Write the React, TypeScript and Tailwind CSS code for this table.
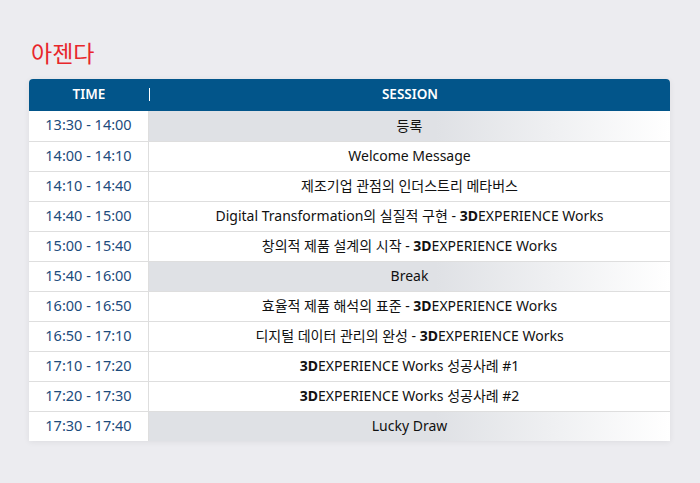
import React from "react";

type Row = { time: string; session: React.ReactNode; gray?: boolean };

const TD = () => <b className="font-bold">3D</b>;

const rows: Row[] = [
  { time: "13:30 - 14:00", session: "등록", gray: true },
  { time: "14:00 - 14:10", session: "Welcome Message" },
  { time: "14:10 - 14:40", session: "제조기업 관점의 인더스트리 메타버스" },
  {
    time: "14:40 - 15:00",
    session: (
      <>
        {"Digital Transformation의 실질적 구현 -\u00a0"}
        <TD />
        {"EXPERIENCE Works"}
      </>
    ),
  },
  {
    time: "15:00 - 15:40",
    session: (
      <>
        {"창의적 제품 설계의 시작 -\u00a0"}
        <TD />
        {"EXPERIENCE Works"}
      </>
    ),
  },
  { time: "15:40 - 16:00", session: "Break", gray: true },
  {
    time: "16:00 - 16:50",
    session: (
      <>
        {"효율적 제품 해석의 표준 -\u00a0"}
        <TD />
        {"EXPERIENCE Works"}
      </>
    ),
  },
  {
    time: "16:50 - 17:10",
    session: (
      <>
        {"디지털 데이터 관리의 완성 -\u00a0"}
        <TD />
        {"EXPERIENCE Works"}
      </>
    ),
  },
  {
    time: "17:10 - 17:20",
    session: (
      <>
        <TD />
        {"EXPERIENCE Works 성공사례 #1"}
      </>
    ),
  },
  {
    time: "17:20 - 17:30",
    session: (
      <>
        <TD />
        {"EXPERIENCE Works 성공사례 #2"}
      </>
    ),
  },
  { time: "17:30 - 17:40", session: "Lucky Draw", gray: true },
];

export default function App() {
  return (
    <div
      className="w-[700px] h-[483px] bg-[#ececf0] pt-[38px] pl-[29px] pr-[30px]"
      style={{ fontFamily: '"Noto Sans", "Noto Sans CJK KR", sans-serif' }}
    >
      <h1 className="text-[23px] leading-[30px] text-[#e8262b] pl-[2px] mb-[11px] font-normal">
        아젠다
      </h1>
      <div className="w-[641px] rounded-t-[4px] bg-white shadow-[0_1px_6px_rgba(0,0,0,0.07)]">
        <div className="flex h-[32px] items-center rounded-t-[4px] bg-[#02558a] text-white text-[13.5px] font-semibold pb-[1px]">
          <div className="w-[120px] text-center">TIME</div>
          <div className="w-px h-[13px] bg-white" />
          <div className="flex-1 text-center">SESSION</div>
        </div>
        {rows.map((r, i) => (
          <div
            key={i}
            className={`flex h-[30px] ${i > 0 ? "border-t border-[#dedede]" : ""}`}
          >
            <div className="w-[120px] shrink-0 flex items-center justify-center pb-[2px] text-[14.5px] text-[#1c4b7c] border-r border-[#dedede]">
              {r.time}
            </div>
            <div
              className={`flex-1 flex items-center justify-center pb-[2px] text-[14px] text-[#111] whitespace-pre ${
                r.gray
                  ? "bg-[linear-gradient(to_right,#dfe1e5_55%,#ffffff_100%)]"
                  : ""
              }`}
            >
              {r.session}
            </div>
          </div>
        ))}
      </div>
    </div>
  );
}
